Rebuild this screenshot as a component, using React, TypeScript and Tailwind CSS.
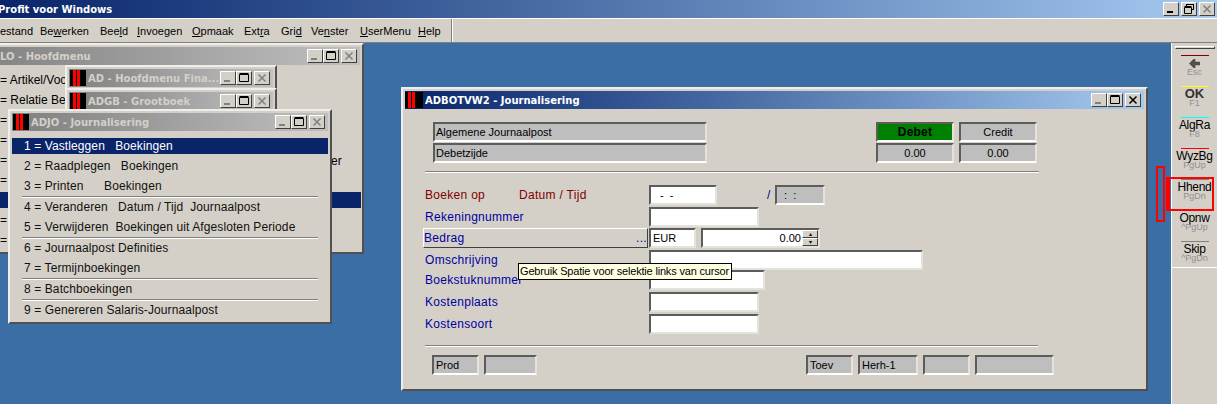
import type { ReactNode } from "react";

const sans = "font-['Liberation_Sans',Arial,sans-serif]";
const raised = "border border-t-white border-l-white border-r-[#404040] border-b-[#404040] bg-[#d4d0c8]";
const sunkenGrey =
  "border-2 border-t-[#5c5c5c] border-l-[#5c5c5c] border-r-[#e4e2dc] border-b-white bg-[#bebebe]";
const sunkenWhite =
  "border-2 border-t-[#5c5c5c] border-l-[#5c5c5c] border-r-[#e4e2dc] border-b-[#e4e2dc] bg-white";

function CaptionButton({ kind, dim }: { kind: "min" | "max" | "close" | "restore"; dim?: boolean }) {
  const c = dim ? "#808080" : "#000000";
  return (
    <div className={`w-4 h-[14px] flex items-center justify-center ${raised}`}>
      <svg width="12" height="10" viewBox="0 0 12 10" fill="none">
        {kind === "min" && <rect x="2" y="7" width="6" height="2" fill={c} />}
        {kind === "max" && <path d="M1.5 1.5h9v7h-9zM1.5 .5h9" stroke={c} strokeWidth="1" />}
        {kind === "close" && <path d="M2.5 1.5l7 7M9.5 1.5l-7 7" stroke={c} strokeWidth="1.5" />}
        {kind === "restore" && (
          <path d="M3.5 2.5v-2h7v5h-2M3 0.5h8M1.5 3.5h7v6h-7zM1.5 2.5h7" stroke={c} strokeWidth="1" />
        )}
      </svg>
    </div>
  );
}

function AppIcon({ wide }: { wide?: boolean }) {
  return (
    <div className={`h-4 bg-black flex shrink-0 pl-[3px] gap-[1px] ${wide ? "w-[18px]" : "w-4"}`}>
      <div className="w-[3px] h-4 bg-[#ff0000]" />
      <div className="w-[3px] h-4 bg-[#ff0000]" />
    </div>
  );
}

function Caption({
  title,
  active,
  className = "",
}: {
  title: string;
  active?: boolean;
  className?: string;
}) {
  return (
    <div
      className={`h-[18px] flex items-center pr-[3px] shrink-0 ${
        active
          ? "bg-gradient-to-r from-[#0a246a] to-[#a6caf0] text-white"
          : "pl-[1px] bg-gradient-to-r from-[#808080] to-[#c0c0c0] text-[#d4d0c8]"
      } ${className}`}
    >
      <AppIcon wide={active} />
      <span className="ml-[2px] mt-[1px] font-['DejaVu_Sans',sans-serif] font-bold text-[10px] whitespace-nowrap flex-1">
        {title}
      </span>
      <CaptionButton kind="min" dim />
      <CaptionButton kind="max" />
      <div className="w-[2px]" />
      <CaptionButton kind="close" dim={!active} />
    </div>
  );
}

function Win({ className, children }: { className: string; children: ReactNode }) {
  return (
    <div
      className={`absolute flex flex-col bg-[#d4d0c8] border-2 border-t-[#f0eeea] border-l-[#f0eeea] border-r-[#505050] border-b-[#505050] p-[2px] ${className}`}
    >
      {children}
    </div>
  );
}

function Sep({ className = "" }: { className?: string }) {
  return <div className={`h-[2px] border-t border-t-[#808080] border-b border-b-white ${className}`} />;
}

function Box({
  white,
  className = "",
  children,
}: {
  white?: boolean;
  className?: string;
  children?: ReactNode;
}) {
  return (
    <div
      className={`h-5 flex items-center whitespace-pre text-[11px] text-black ${
        white ? sunkenWhite : sunkenGrey
      } ${className}`}
    >
      {children}
    </div>
  );
}

function FormRow({
  label,
  className = "",
  children,
}: {
  label: string;
  className?: string;
  children?: ReactNode;
}) {
  return (
    <div className={`h-5 flex items-center ${className}`}>
      <span className="w-[224px] text-[#0000a0] text-[12px] tracking-[0.3px]">{label}</span>
      {children}
    </div>
  );
}

function ToolButton({
  line,
  label,
  sub,
  className = "h-[31px]",
  big,
  icon,
}: {
  line: string;
  label?: string;
  sub: string;
  className?: string;
  big?: boolean;
  icon?: boolean;
}) {
  return (
    <div className={`flex flex-col items-center shrink-0 ${className}`}>
      <div className={`w-7 h-[1px] shrink-0 ${line}`} />
      {icon ? (
        <svg width="11" height="11" viewBox="0 0 12 12" className="mt-[2px] shrink-0">
          <path d="M0 6l5-5h2v3h5v4H7v3H5z" fill="#505050" />
        </svg>
      ) : (
        <span
          className={`mt-[1px] leading-[12px] whitespace-nowrap ${
            big ? "font-bold text-[13px] text-[#333]" : "text-[12px] tracking-[-0.3px] text-black"
          }`}
        >
          {label}
        </span>
      )}
      <span className="text-[9px] leading-[7px] text-[#909090] whitespace-nowrap">{sub}</span>
    </div>
  );
}

function MenuItem({ pre = "", u, post = "", className }: { pre?: string; u?: string; post?: string; className: string }) {
  return (
    <span className={`absolute top-[4px] whitespace-nowrap ${className}`}>
      {pre}
      <span className="underline">{u}</span>
      {post}
    </span>
  );
}

const journalItems = [
  ["2 = Raadplegen   Boekingen", "3 = Printen      Boekingen"],
  ["4 = Veranderen   Datum / Tijd  Journaalpost", "5 = Verwijderen  Boekingen uit Afgesloten Periode"],
  ["6 = Journaalpost Definities", "7 = Termijnboekingen"],
  ["8 = Batchboekingen"],
  ["9 = Genereren Salaris-Journaalpost"],
];

const hoofdRows = ["= Artikel/Voo", "= Relatie Be", "=", "=", "=", "=", "=", "=", "="];

export default function App() {
  return (
    <div className={`relative w-[1217px] h-[404px] overflow-hidden bg-[#3a6ea5] ${sans}`}>
      {/* App title bar */}
      <div className="h-[18px] flex items-center bg-gradient-to-r from-[#0a246a] to-[#a6caf0]">
        <span className="ml-[-2px] mt-[1px] font-['DejaVu_Sans',sans-serif] font-bold text-[10px] text-white flex-1">
          Profit voor Windows
        </span>
        <div className="flex mr-[2px] gap-[2px]">
          <CaptionButton kind="min" />
          <CaptionButton kind="restore" />
          <CaptionButton kind="close" dim />
        </div>
      </div>

      {/* Menu band */}
      <div className="h-[25px] flex bg-[#d4d0c8] border-t border-t-white border-b border-b-[#808080]">
        <div className="relative w-[452px] h-[23px] border-r border-r-[#808080] text-[11px] text-black">
          <MenuItem post="estand" className="left-0" />
          <MenuItem pre="Be" u="w" post="erken" className="left-[40px]" />
          <MenuItem pre="Bee" u="l" post="d" className="left-[100px]" />
          <MenuItem u="I" post="nvoegen" className="left-[137px]" />
          <MenuItem u="O" post="pmaak" className="left-[192px]" />
          <MenuItem pre="Ext" u="r" post="a" className="left-[244px]" />
          <MenuItem pre="Gri" u="d" className="left-[281px]" />
          <MenuItem pre="Ve" u="n" post="ster" className="left-[311px]" />
          <MenuItem u="U" post="serMenu" className="left-[360px]" />
          <MenuItem u="H" post="elp" className="left-[418px]" />
        </div>
        <div className="flex-1 border-l border-l-white" />
      </div>

      {/* MDI windows */}
      <Win className="left-[-40px] top-[43px] w-[404px] h-[211px]">
        <Caption title="LO - Hoofdmenu" className="!pl-[18px]" />
        <div className="relative flex-1 text-[12px] text-black pt-[5px]">
          {hoofdRows.map((row, i) => (
            <div key={i} className="h-5 pl-[36px] leading-5 whitespace-pre">
              {row}
            </div>
          ))}
          <div className="absolute left-[36px] top-[127px] w-[361px] h-4 bg-[#0a246a]" />
          <span className="absolute left-[367px] top-[87px]">er</span>
        </div>
      </Win>

      <Win className="left-[65px] top-[65px] w-[212px] h-[30px]">
        <Caption title="AD - Hoofdmenu Fina..." />
      </Win>
      <Win className="left-[65px] top-[88px] w-[212px] h-[30px]">
        <Caption title="ADGB - Grootboek" />
      </Win>

      <Win className="left-[8px] top-[109px] w-[324px] h-[215px]">
        <Caption title="ADJO - Journalisering" />
        <div className="flex flex-col mt-[7px] text-[12px] text-[#111] tracking-[0.1px]">
          <div className="h-4 mb-[2px] bg-[#0a246a] text-white pl-[12px] leading-4 whitespace-pre">
            1 = Vastleggen   Boekingen
          </div>
          {journalItems.map((group, g) => (
            <div key={g}>
              {g > 0 && <Sep className="mx-[10px] w-[296px] mb-[-1px]" />}
              {group.map((item) => (
                <div key={item} className="h-5 pl-[12px] leading-5 whitespace-pre">
                  {item}
                </div>
              ))}
            </div>
          ))}
        </div>
      </Win>

      {/* Main form window */}
      <Win className="left-[401px] top-[87px] w-[747px] h-[304px]">
        <Caption title="ADBOTVW2 - Journalisering" active />
        <div className="flex-1 flex flex-col pt-[13px] text-[12px]">
          <div className="flex pl-[28px]">
            <div className="flex flex-col gap-[1px] w-[274px]">
              <Box className="pl-[1px]">Algemene Journaalpost</Box>
              <Box className="pl-[1px]">Debetzijde</Box>
            </div>
            <div className="ml-[169px] grid grid-cols-[78px_78px] gap-x-[5px] gap-y-[1px]">
              <Box className="justify-center !bg-[#008000] font-bold !text-[12px] tracking-[0.2px]">Debet</Box>
              <Box className="justify-center">Credit</Box>
              <Box className="justify-center">0.00</Box>
              <Box className="justify-center">0.00</Box>
            </div>
          </div>

          <Sep className="mt-[8px] ml-[20px] w-[614px]" />

          <div className="mt-[12px] flex flex-col relative">
            <div className="h-5 flex items-center">
              <span className="w-[94px] ml-[20px] text-[#800000] tracking-[0.3px]">Boeken op</span>
              <span className="w-[130px] text-[#800000] tracking-[0.3px]">Datum / Tijd</span>
              <Box white className="w-[68px] pl-[6px]">{" -  -"}</Box>
              <span className="ml-[50px] w-2 text-[#0000a0]">/</span>
              <Box className="w-[50px] pl-[4px]">{" :  :"}</Box>
            </div>
            <div className="pl-[20px] flex flex-col">
              <FormRow label="Rekeningnummer" className="mt-[2px]">
                <Box white className="w-[110px]" />
              </FormRow>
              <div className="h-5 mt-[1px] flex items-center">
                <div className="w-[225px] h-5 ml-[-2px] mr-[1px] flex items-center justify-between border border-t-white border-l-white border-b-[#404040] border-r-[#404040] text-[#0000a0] tracking-[0.3px]">
                  <span>Bedrag</span>
                  <span className="leading-[14px]">...</span>
                </div>
                <Box white className="w-[47px] pl-[2px]">EUR</Box>
                <Box white className="ml-[5px] w-[119px] justify-end relative">
                  <span className="pr-[17px]">0.00</span>
                  <div className="absolute right-0 top-0 flex flex-col w-[16px] h-4">
                    <div className={`h-2 flex items-center justify-center text-[6px] leading-none ${raised}`}>▴</div>
                    <div className={`h-2 flex items-center justify-center text-[6px] leading-none ${raised}`}>▾</div>
                  </div>
                </Box>
              </div>
              <FormRow label="Omschrijving" className="mt-[2px]">
                <Box white className="w-[274px]" />
              </FormRow>
              <FormRow label="Boekstuknummer">
                <Box white className="w-[116px]" />
              </FormRow>
              <FormRow label="Kostenplaats" className="mt-[2px]">
                <Box white className="w-[110px]" />
              </FormRow>
              <FormRow label="Kostensoort" className="mt-[2px]">
                <Box white className="w-[110px]" />
              </FormRow>
            </div>

            {/* Tooltip */}
            <div className="absolute left-[113px] top-[78px] w-[214px] h-[17px] border border-black bg-[#ffffe1] text-black text-[11px] tracking-[-0.18px] leading-[15px] pl-[1px] whitespace-nowrap">
              Gebruik Spatie voor selektie links van cursor
            </div>
          </div>

          <Sep className="mt-[11px] ml-[20px] w-[613px]" />

          <div className="mt-[8px] pl-[27px] flex">
            <Box className="w-[47px] pl-[2px]">Prod</Box>
            <Box className="ml-[5px] w-[53px]" />
            <Box className="ml-[269px] w-[47px] pl-[2px]">Toev</Box>
            <Box className="ml-[5px] w-[60px] pl-[2px]">Herh-1</Box>
            <Box className="ml-[5px] w-[47px]" />
            <Box className="ml-[5px] w-[79px]" />
          </div>
        </div>
      </Win>

      {/* Right toolbar */}
      <div className="absolute left-[1171px] top-[43px] bottom-0 w-[46px] bg-[#d4d0c8] border-l border-l-white flex flex-col items-center text-black">
        <div className={`mt-[3px] w-[40px] h-[3px] mb-[6px] shrink-0 ${raised}`} />
        <ToolButton line="bg-[#800000]" sub="Esc" icon />
        <ToolButton line="bg-[#ffff00]" label="OK" sub="F1" big />
        <ToolButton line="bg-[#00ffff]" label="AlgRa" sub="F8" />
        <ToolButton line="bg-[#ff0000]" label="WyzBg" sub="PgUp" />
        <ToolButton line="bg-[#808080]" label="Hhend" sub="PgDn" />
        <ToolButton line="bg-transparent" label="Opnw" sub="^PgUp" />
        <ToolButton line="bg-[#808080]" label="Skip" sub="^PgDn" className="h-[26px]" />
        <div className="w-full h-[1px] shrink-0 bg-white" />
      </div>

      {/* Red annotation rectangles */}
      <div className="absolute left-[1156px] top-[166px] w-[9px] h-[56px] border-2 border-[#ff0000]" />
      <div className="absolute left-[1166px] top-[177px] w-[48px] h-[34px] border-2 border-l-4 border-[#ff0000]" />
    </div>
  );
}
